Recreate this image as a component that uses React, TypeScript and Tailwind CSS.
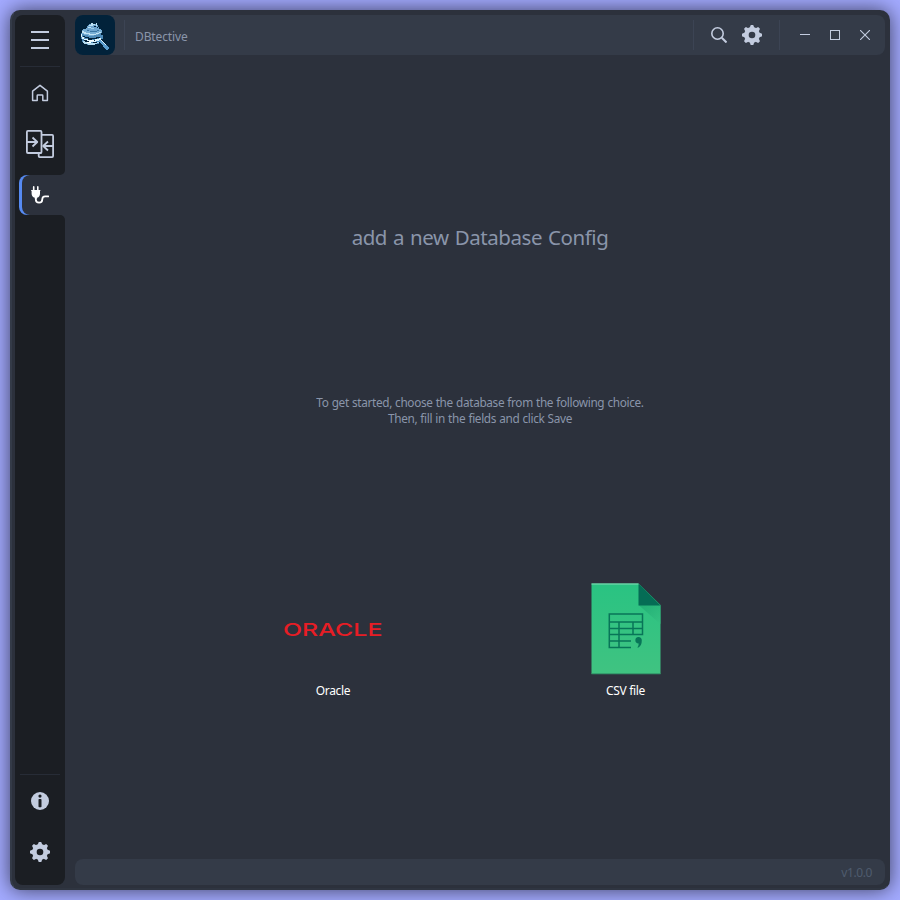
import React from "react";

function Gear({ hole }: { hole: string }) {
  return (
    <svg width="20" height="20" viewBox="0 0 20 20" fill="#c3ccdf">
      <circle cx="10" cy="10" r="7.9" />
      {[0, 45, 90, 135, 180, 225, 270, 315].map((a) => (
        <path key={a} d="M7.6 3.2 8.5.5Q8.6 0 9.1 0h1.8q.5 0 .6.5l.9 2.7z" transform={`rotate(${a} 10 10)`} />
      ))}
      <circle cx="10" cy="10" r="3.3" fill={hole} />
    </svg>
  );
}

function Logo() {
  return (
    <svg width="40" height="40" viewBox="0 0 40 40">
      <rect width="40" height="40" rx="8" fill="#02223a" />
      <g shapeRendering="crispEdges">
        <path d="M6 18h2v-2h18v4h2v4h-2v3h-2v2h-4v1h-8v-1H9v-2H7v-3H6z" fill="#4f8bb8" />
        <path d="M6 19h1v3h2v2h4v1h7v-1h4v-1h2v2h-2v1h-3v1h-9v-1H9v-2H7v-2H6z" fill="#e2f5fd" />
        <path d="M8 21h2v1h4v1h7v-1h4v1h-3v1h-9v-1h-3v-1H8z" fill="#02223a" />
        <path d="M8 26h3v1h4v1h6v-1h3v1h-2v1h-2v1h-7v-1H9v-1H8z" fill="#b4dbf0" />
        <path d="M13 24h4v1h3v1h-5v-1h-2zM9 25h3v1h2v1h-4v-1H9zM18 27h4v1h-4z" fill="#02223a" />
        <path d="M15 25h4v1h-4zM12 27h4v1h-4z" fill="#f8ffff" />
        <path d="M8 14h3v-1h13v1h2v1h1v3h-2v1h-2v1h-4v1h-6v-1H9v-1H7v-4h1z" fill="#78aed4" />
        <path d="M7 16h2v1h2v1h4v1h6v-1h3v-1h2v1h-2v1h-3v1h-7v-1H9v-1H7z" fill="#c4e4f4" />
        <path d="M12 15h3v1h7v-1h2v1h-2v1h-7v-1h-3z" fill="#3a76a3" />
        <path d="M12 14v-3h1v-1h1V9h2V8h2v1h3V8h1v2h1v2h1v3h-2v1h-8v-1h-2z" fill="#6ea4ce" />
        <path d="M14 10h2V8h2v1h2v1h-2v1h-4zM13 12h3v1h-3zM21 8h1v3h-1z" fill="#bee2f4" />
        <path d="M19 11h2v1h-2zM22 12h1v1h-1z" fill="#02223a" />
        <path d="M16 13h3v1h-3z" fill="#9bcae6" />
        <path d="M24 24h2v1h1v1h1v1h1v1h1v1h1v1h1v1h1v1h1v2h-1v1h-2v-1h-1v-1h-1v-1h-1v-2h-1v-1h-1v-1h-1v-1h-1v-2h-1z" fill="#5b9ed0" />
        <path d="M24 24h2v1h1v1h1v1h1v1h1v1h1v1h-1v-1h-1v-1h-1v-1h-1v-1h-1v-1h-2z" fill="#d8f2ff" />
      </g>
    </svg>
  );
}

function SideButton({ children }: { children: React.ReactNode }) {
  return <button className="flex h-[50px] w-[50px] items-center justify-center">{children}</button>;
}

function Sidebar() {
  return (
    <aside className="flex w-[50px] shrink-0 flex-col rounded-lg bg-[#1b1e23]">
      <SideButton>
        <svg width="18" height="18" fill="#c3ccdf" className="mb-px">
          <path d="M0 0h18v2H0zM0 8h18v2H0zM0 16h18v2H0z" />
        </svg>
      </SideButton>
      <div className="mx-[5px] my-px h-px bg-[#272c36]" />
      <nav className="flex flex-col gap-px">
        <SideButton>
          <svg width="18" height="18" viewBox="0 0 18 18" fill="none" stroke="#c3ccdf" strokeWidth="1.5" strokeLinejoin="round">
            <path d="M1.600 7.200 9 1.300l7.400 5.900v9.300h-4.600v-4.800q0-.6-.6-.6H6.800q-.6 0-.6.6v4.800H1.600z" />
          </svg>
        </SideButton>
        <SideButton>
          <svg width="28" height="28" viewBox="0 0 28 28" fill="none" stroke="#c3ccdf" strokeWidth="1.8" strokeLinejoin="round">
            <path d="M15.500 23H1.900q-1 0-1-1V1.900q0-1 1-1h12.600q1 0 1 1V22q0 1-1 1" />
            <path d="M15.500 4.900h10.600q1 0 1 1v20.200q0 1-1 1H13.700q-1 0-1-1V23" />
            <path d="M1 12h10.300M6.500 7.500l4.800 4.500-4.800 4.500M27 16H17.200m4.800-4.500L17.200 16l4.800 4.500" />
          </svg>
        </SideButton>
        <div className="relative flex h-[50px] items-center">
          <div className="absolute right-0 top-0 h-[5px] w-[5px] bg-[#2c313c]">
            <div className="h-full w-full rounded-br-[5px] bg-[#1b1e23]" />
          </div>
          <div className="absolute bottom-0 right-0 h-[5px] w-[5px] bg-[#2c313c]">
            <div className="h-full w-full rounded-tr-[5px] bg-[#1b1e23]" />
          </div>
          <div className="ml-1 h-10 flex-1 overflow-hidden rounded-l-lg bg-[#568af2] pl-[3px]">
            <div className="flex h-full items-center rounded-l-lg bg-[#2c313c] pl-[9px]">
              <svg width="18" height="18" viewBox="0 0 18 18" fill="none">
                <path d="M2.700.9v4M6.800.9v4" stroke="#fff" strokeWidth="1.600" strokeLinecap="round" />
                <path d="M0 4.500Q0 4 .6 4h8.300q.6 0 .6.500t-.5.600v2.400q0 3.500-2.900 4.300v1H3.800v-1Q.6 11 .6 7.500V5.100Q0 5 0 4.500z" fill="#fff" />
                <path d="M4.800 12v1.200q0 3.400 3.300 3.400 3.200 0 3.200-3.400 0-2.900 2.800-2.900h3.200" stroke="#fff" strokeWidth="1.800" strokeLinecap="round" />
              </svg>
            </div>
          </div>
        </div>
      </nav>
      <div className="mt-auto pb-2">
        <div className="mx-[5px] mb-px h-px bg-[#272c36]" />
        <div className="flex flex-col gap-px">
          <SideButton>
            <svg width="18" height="18" viewBox="0 0 18 18">
              <circle cx="9" cy="9" r="9" fill="#c3ccdf" />
              <circle cx="9" cy="4.100" r="1.600" fill="#1b1e23" />
              <rect x="7.500" y="7" width="3" height="8.300" rx=".7" fill="#1b1e23" />
            </svg>
          </SideButton>
          <SideButton>
            <Gear hole="#1b1e23" />
          </SideButton>
        </div>
      </div>
    </aside>
  );
}

function TitleBar() {
  return (
    <header className="flex h-10 shrink-0 items-center rounded-lg bg-[#343b48]">
      <Logo />
      <div className="ml-[9px] h-[30px] w-px bg-[#3c4454]" />
      <span className="ml-[10px] mt-[3px] text-[12px] tracking-[-0.12px] text-[#8a95aa]">DBtective</span>
      <div className="ml-auto h-[30px] w-px bg-[#3c4454]" />
      <svg className="ml-[17px]" width="16" height="16" viewBox="0 0 16 16" fill="none" stroke="#c3ccdf">
        <circle cx="6.500" cy="6.500" r="5.700" strokeWidth="1.600" />
        <path d="m10.800 10.800 4.700 4.700" strokeWidth="2" />
      </svg>
      <div className="ml-[15px]">
        <Gear hole="#343b48" />
      </div>
      <div className="ml-[17px] h-[30px] w-px bg-[#3c4454]" />
      <div className="ml-[10px] flex pr-[5px]">
        <button className="flex h-[30px] w-[30px] items-center justify-center">
          <span className="mb-px h-px w-[10px] bg-[#c3ccdf]" />
        </button>
        <button className="flex h-[30px] w-[30px] items-center justify-center">
          <span className="h-[10px] w-[10px] border border-[#c3ccdf]" />
        </button>
        <button className="flex h-[30px] w-[30px] items-center justify-center">
          <svg width="10" height="10" stroke="#c3ccdf" strokeWidth="1.100">
            <path d="m0 0 10 10M10 0 0 10" />
          </svg>
        </button>
      </div>
    </header>
  );
}

function CsvIcon() {
  return (
    <svg width="70" height="92" viewBox="0 0 70 92">
      <defs>
        <linearGradient id="sheet" x1="0" y1="0" x2="0" y2="1">
          <stop offset="0" stopColor="#29c382" />
          <stop offset="1" stopColor="#40c381" />
        </linearGradient>
        <linearGradient id="fold" x1="0" y1="0" x2="1" y2="1">
          <stop offset="0" stopColor="#1da470" />
          <stop offset="1" stopColor="#35c282" />
        </linearGradient>
      </defs>
      <path d="M.5.5h47L69.500 22v69H.5z" fill="url(#sheet)" />
      <path d="M47.500 22h22v19z" fill="url(#fold)" opacity=".7" />
      <path d="M47.500.5 69.500 22.500h-22z" fill="#056c55" />
      <path d="M.5 1h47" stroke="#86dcb7" />
      <path d="M.5 90.800h69" stroke="#2f8e66" />
      <g fill="none" stroke="#087558" strokeWidth="1.500">
        <path d="M40 64.500H18.300V31h33.200v20.500H18.300M18.300 39h33.200M18.300 45.500h33.200M18.300 58H40M28 39v25.500M42 39v12.500" />
      </g>
      <path d="M47.500 54a3.200 3.200 0 0 1 3.300 3.400q0 4.700-3.300 7.200h-1.200q1.500-2 1.400-4.100a3.200 3.200 0 1 1-.2-6.500" fill="#087558" />
    </svg>
  );
}

export default function App() {
  return (
    <div className="h-[900px] w-[900px] overflow-hidden bg-[#a3aaff] p-[10px] font-['Noto_Sans','Open_Sans',sans-serif]">
      <div className="flex h-[880px] w-[880px] gap-[10px] rounded-[10px] border-2 border-[#343b48] border-b-[#2f3541] border-r-[#2c313c] border-t-[#2c313c] bg-[#2c313c] p-[3px] shadow-[0_0_20px_rgba(0,0,0,0.63)]">
        <Sidebar />
        <div className="flex min-w-0 flex-1 flex-col">
          <TitleBar />
          <main className="flex flex-1 flex-col items-center">
            <h1 className="mt-[166px] whitespace-nowrap text-[20.500px] leading-[32px] tracking-[-0.440px] text-[#8a95aa] [word-spacing:1.100px]">
              add a new Database Config
            </h1>
            <p className="mt-[141px] whitespace-nowrap text-center text-[11.800px] leading-[16px] tracking-[-0.340px] text-[#8a95aa] [word-spacing:0.400px]">
              To get started, choose the database from the following choice.
              <br />
              Then, fill in the fields and click Save
            </p>
            <div className="mt-[157px] flex w-full pl-[111px] text-[12px] leading-[16px] tracking-[-0.300px] text-white">
              <button className="flex w-[293px] flex-col items-center">
                <svg width="100" height="92" viewBox="0 0 100 92">
                  <text x="0" y="52.700" textLength="99.500" lengthAdjust="spacingAndGlyphs" fontFamily="Inter, sans-serif" fontSize="17.500" fontWeight="500" fill="#e71d25" letterSpacing="0">
                    ORACLE
                  </text>
                </svg>
                <span className="mt-2 pl-px">Oracle</span>
              </button>
              <button className="flex w-[293px] flex-col items-center">
                <CsvIcon />
                <span className="mt-2">CSV file</span>
              </button>
            </div>
          </main>
          <footer className="flex h-[26px] shrink-0 items-center justify-end rounded-lg bg-[#343b48] pr-[13px] pt-[2px] text-[12px] tracking-[-0.400px] text-[#4f5b6e]">
            v1.0.0
          </footer>
        </div>
      </div>
    </div>
  );
}
